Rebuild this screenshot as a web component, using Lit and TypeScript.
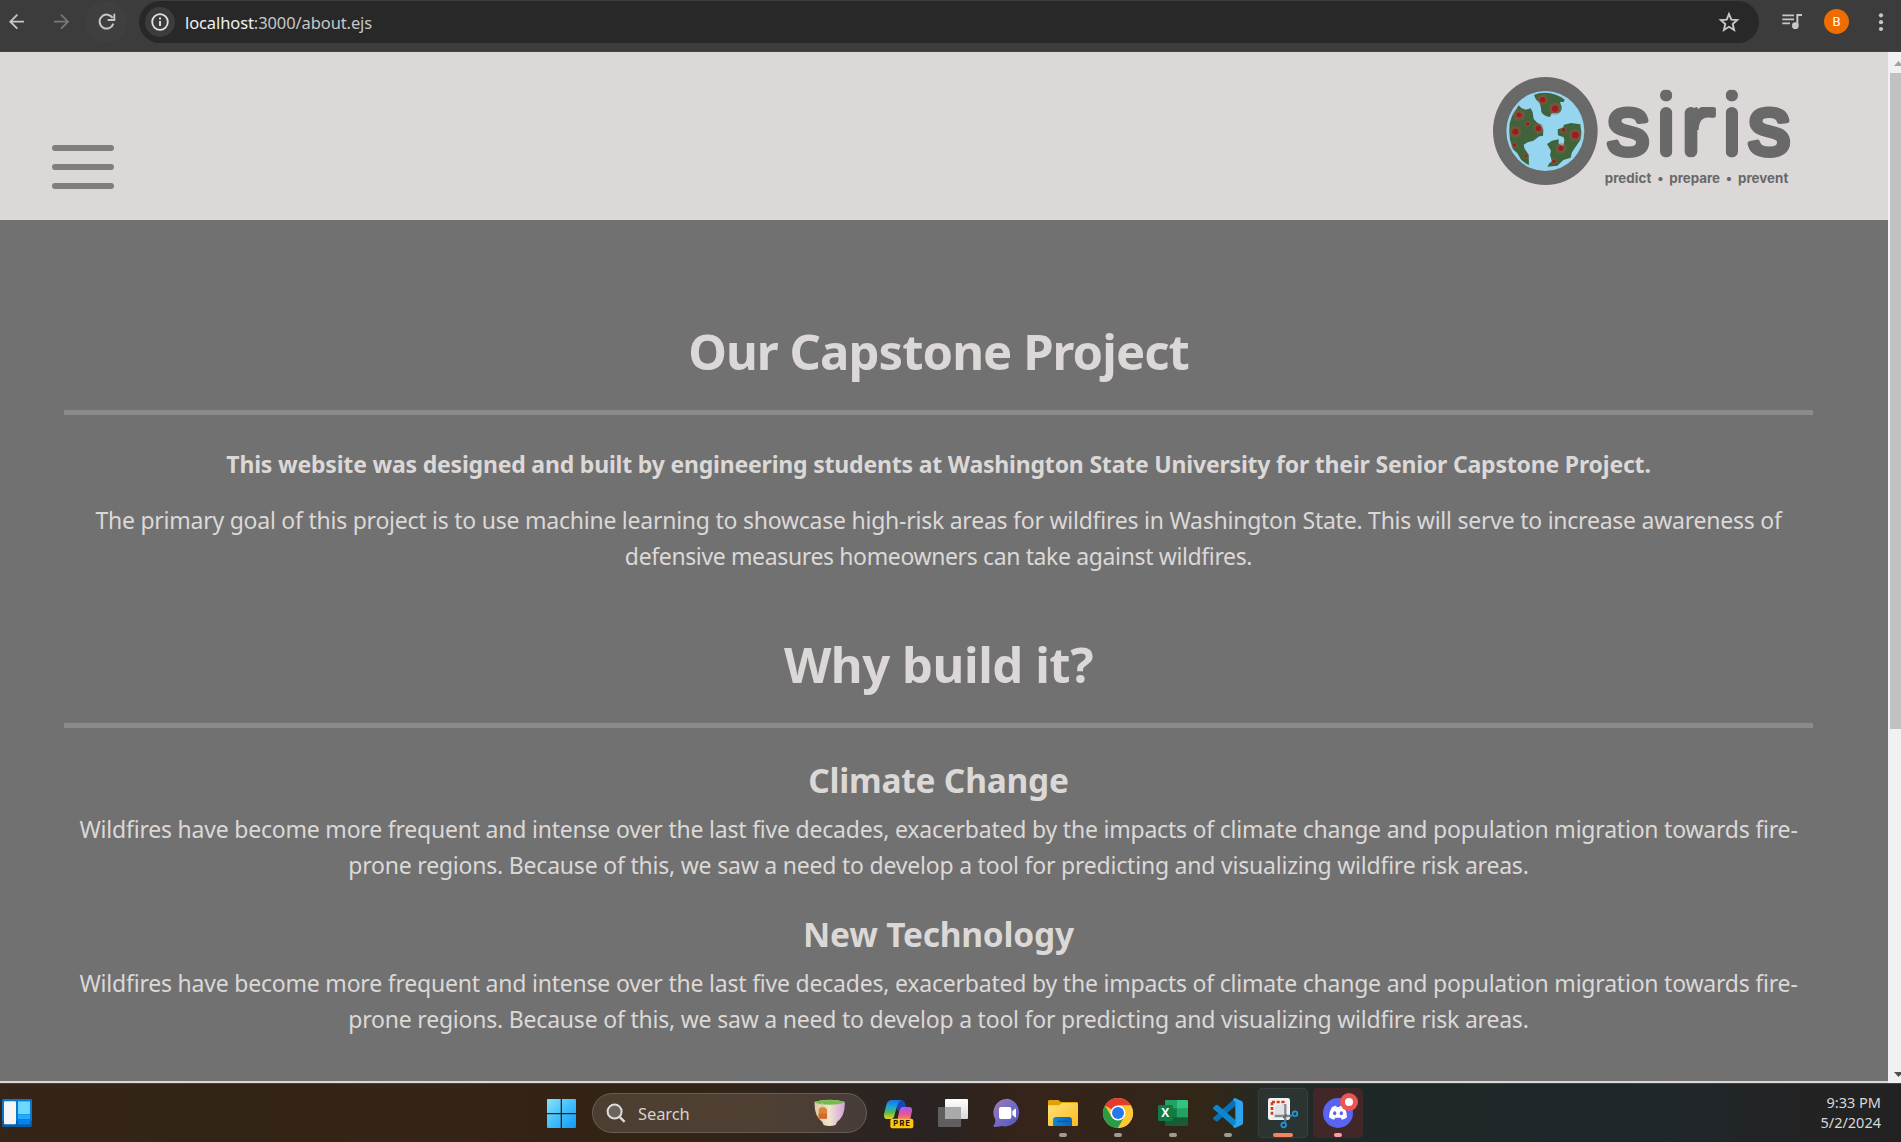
import { LitElement, html, svg, css } from "lit";
import { customElement } from "lit/decorators.js";

@customElement("browser-toolbar")
class BrowserToolbar extends LitElement {
  static styles = css`
    :host { display: flex; height: 52px; background: #3c3c3c; font-family: "Noto Sans", "Open Sans", sans-serif; box-shadow: inset 0 -1px #424242; }
    svg { display: block; flex: none; }
    .pill { display: flex; align-items: center; width: 1620px; height: 42px; margin-top: 1px; border-radius: 21px; background: #282828; box-sizing: border-box; padding: 0 18px 0 6px; }
    .url { flex: 1; margin-left: 10px; font-size: 16.5px; line-height: 42px; letter-spacing: -0.1px; color: #c7c7c7; padding-top: 1px; }
    .host { color: #f1f1f1; }
    .right { display: flex; align-items: center; height: 43px; flex: 1; }
    .music { margin-left: 22px; }
    .avatar { width: 25px; height: 25px; margin-left: 21px; border-radius: 50%; background: #ef6c00; color: #fff; font: 400 13px/25px Roboto, sans-serif; text-align: center; }
    .dots { margin-left: 27px; }
  `;
  render() {
    return html`
      <svg width="43" height="43" viewBox="0 0 129 129" fill="none" stroke="#c7c7c7" stroke-width="5.5"><path d="M72 65H31M52 44L31 65L52 86" /></svg>
      <svg width="42" height="43" viewBox="129 0 126 129" fill="none" stroke="#777" stroke-width="5.5"><path d="M162 65H203M183 44L204 65L183 86" /></svg>
      <svg width="54" height="43" viewBox="255 0 162 129" fill="none"><circle cx="319" cy="65" r="62" fill="#3f3f3f" /><path d="M338 54A21 21 0 1 0 340 71" stroke="#c7c7c7" stroke-width="6" /><path d="M343 41V60H323" stroke="#c7c7c7" stroke-width="5.5" /></svg>
      <div class="pill">
        <svg width="30" height="30" viewBox="0 0 30 30"><circle cx="15" cy="15" r="15" fill="#3c3c3c" /><circle cx="15" cy="15" r="7.8" fill="none" stroke="#e3e3e3" stroke-width="1.8" /><path d="M15 14v5M15 10.4v2" stroke="#e3e3e3" stroke-width="1.9" /></svg>
        <div class="url"><span class="host">localhost</span>:3000/about.ejs</div>
        <svg width="24" height="24" viewBox="0 0 24 24" fill="none" stroke="#c7c7c7" stroke-width="1.9"><path d="M12 4L14.3 9.6L20.2 10L15.7 14L17.1 20L12 16.8L6.9 20L8.3 14L3.8 10L9.7 9.6Z" /></svg>
      </div>
      <div class="right">
        <svg class="music" width="22" height="20" viewBox="303 34 66 60"><path d="M307 44H342M307 56H342M307 68H330" stroke="#c7c7c7" stroke-width="5.5" /><path d="M352 76V43H366" fill="none" stroke="#c7c7c7" stroke-width="6" /><circle cx="346" cy="75" r="10" fill="#c7c7c7" /></svg>
        <div class="avatar">B</div>
        <svg class="dots" width="10" height="24" viewBox="0 0 10 24" fill="#c7c7c7"><circle cx="5" cy="5.3" r="2.1" /><circle cx="5" cy="12.2" r="2.1" /><circle cx="5" cy="19" r="2.1" /></svg>
      </div>`;
  }
}

@customElement("osiris-logo")
class OsirisLogo extends LitElement {
  static styles = css`
    :host { display: block; width: 340px; height: 140px; }
    svg { display: block; }
    .word { font-family: "Liberation Sans", sans-serif; font-size: 262px; fill: #696969; stroke: #696969; stroke-width: 14px; stroke-linejoin: round; }
    .s { font-size: 252px; stroke-width: 18px; }
    .tag { font-family: Inter, sans-serif; font-weight: 700; font-size: 40px; fill: #696969; }
    .dot { text-anchor: middle; }
  `;
  render() {
    const fires = [[218, 119, 8, 16], [255, 146, 9, 19], [147, 165, 7, 19], [173, 192, 5, 9], [205, 205, 8, 16], [136, 215, 9, 18], [133, 255, 5, 10], [168, 288, 4, 8], [281, 210, 5, 10], [316, 225, 10, 19], [273, 265, 7, 17], [252, 304, 5, 9]];
    return html`
      <svg width="340" height="140" viewBox="0 0 1020 420">
        <defs>
          <clipPath id="round">
            <rect x="400" y="130" width="162" height="175" /><rect x="822" y="130" width="170" height="175" />
            <rect x="570" y="141" width="37" height="152" rx="18.5" /><rect x="767" y="141" width="37" height="152" rx="18.5" />
            <circle cx="588.500" cy="106" r="18.500" /><circle cx="785.500" cy="106" r="18.500" />
            <rect x="644" y="141" width="38" height="152" rx="19" /><rect x="664" y="141" width="83" height="40" rx="18" /><rect x="680" y="160" width="30" height="50" />
          </clipPath>
        </defs>
        <ellipse cx="226" cy="213" rx="157" ry="162" fill="#696969" />
        <ellipse cx="226" cy="213" rx="117" ry="120" fill="#95d5f0" />
        <g fill="#40633b">
          <path d="M192 105Q205 98 225 98Q260 99 284 119L281 126L270 126L275 141Q276 157 262 160L245 160L240 171Q222 170 214 156Q213 136 207 126Q197 121 192 105Z" />
          <path d="M146 136L154 144L167 149L182 145L188 157L191 177L202 188L212 194L220 211L219 228L208 229L190 242L173 247L161 254L164 266L176 284L177 315Q160 308 152 297L142 280L129 268L120 240L118 215L119 190L126 168Z" />
          <path d="M282 194L303 189L331 193L334 218L331 240L317 260L306 277L302 293L280 300L262 317L232 320L238 310L246 304L240 285L243 272L231 252L246 242L266 238L266 252L280 258L283 240L281 232L264 226L263 208L279 203Z" />
        </g>
        ${fires.map(([x, y, r, g]) => svg`<circle cx=${x} cy=${y} r=${g} fill="#b05545" opacity=".3"/><circle cx=${x} cy=${y} r=${g * 0.7} fill="#a83c30" opacity=".3"/><circle cx=${x} cy=${y} r=${r} fill="#a5161e"/>`)}
        <g clip-path="url(#round)" class="word">
          <text><tspan class="s" x="412" y="282">s</tspan><tspan x="559.500" y="286">i</tspan></text>
          <text transform="translate(626 286) scale(1.24 1)">r</text>
          <text><tspan x="756.500" y="286">i</tspan><tspan class="s" x="835" y="282">s</tspan></text>
        </g>
        <g class="tag">
          <text x="404" y="368" textLength="140">predict</text><text class="dot" x="571" y="368">•</text>
          <text x="598" y="368" textLength="152">prepare</text><text class="dot" x="777" y="368">•</text>
          <text x="804" y="368" textLength="151">prevent</text>
        </g>
      </svg>`;
  }
}

@customElement("about-page")
class AboutPage extends LitElement {
  static styles = css`
    :host { display: flex; height: 1031px; font-family: "Noto Sans", "Open Sans", sans-serif; color: #dcd8d7; }
    .view { display: flex; flex-direction: column; width: 1888px; }
    header { display: flex; justify-content: space-between; height: 168px; background: #dcd8d7; }
    .menu { display: flex; flex-direction: column; gap: 13px; margin: 93px 0 0 52px; }
    .bar { width: 62px; height: 6px; border-radius: 3px; background: #7f7f7e; }
    osiris-logo { margin: 8px 78px 0 0; }
    main { flex: 1; box-sizing: border-box; padding: 100px 75px 0 64px; background: #717171; text-align: center; white-space: nowrap; border-bottom: 2px solid #dcd8d7; }
    h1, h2, p { margin: 0; }
    h1 { font-size: 49px; line-height: 62px; letter-spacing: -0.95px; font-weight: 700; }
    .rule { height: 5px; background: #8b8b8b; margin-top: 28px; }
    .lead { margin-top: 31px; font-size: 23px; line-height: 36px; font-weight: 700; letter-spacing: -0.195px; }
    .body { font-size: 23px; line-height: 36px; letter-spacing: -0.21px; }
    .goal { margin-top: 20px; letter-spacing: -0.24px; }
    .tight { letter-spacing: -0.37px; }
    .why { margin-top: 59px; letter-spacing: -0.45px; }
    h2 { margin-top: 29px; font-size: 33.5px; line-height: 44px; font-weight: 700; letter-spacing: -0.22px; }
    .rule + h2 { margin-top: 30px; }
    h2 + .body { margin-top: 9px; }
    .scroll { width: 13px; background: #f1f1f1; overflow: hidden; display: flex; flex-direction: column; justify-content: space-between; }
    .thumb { width: 11px; height: 656px; margin: 0 0 auto 2px; background: #c1c1c1; }
    .scroll svg { display: block; }
  `;
  render() {
    const reason = (title: string) => html`
      <h2>${title}</h2>
      <p class="body">Wildfires have become more frequent and intense over the last five decades, exacerbated by the impacts of climate change and population migration towards fire-<br />prone regions. Because of this, we saw a need to develop a tool for predicting and visualizing wildfire risk areas.</p>`;
    return html`
      <div class="view">
        <header>
          <div class="menu"><div class="bar"></div><div class="bar"></div><div class="bar"></div></div>
          <osiris-logo></osiris-logo>
        </header>
        <main>
          <h1>Our Capstone Project</h1>
          <div class="rule"></div>
          <p class="lead">This website was designed and built by engineering students at Washington State University for their Senior Capstone Project.</p>
          <p class="body goal">The primary goal of this project is to use machine learning to showcase high-risk areas for wildfires in Washington State. This will serve to increase awareness of<br /><span class="tight">defensive measures homeowners can take against wildfires.</span></p>
          <h1 class="why">Why build it?</h1>
          <div class="rule"></div>
          ${reason("Climate Change")} ${reason("New Technology")}
        </main>
      </div>
      <div class="scroll">
        <svg width="13" height="21" viewBox="0 0 13 21"><path d="M6 14L10.5 9L15 14Z" fill="#a3a3a3" /></svg>
        <div class="thumb"></div>
        <svg width="13" height="20" viewBox="0 0 13 20"><path d="M6 9L10.5 14L15 9Z" fill="#505050" /></svg>
      </div>`;
  }
}

@customElement("task-bar")
class TaskBar extends LitElement {
  static styles = css`
    :host { display: flex; height: 59px; box-sizing: border-box; font-family: "Noto Sans", "Open Sans", sans-serif; border-top: 1px solid #4a4038;
      background: linear-gradient(90deg, #352518 0, #322416 200px, #352417 400px, #322315 700px, #2c2522 850px, #2a2321 940px, #352419 1020px, #33251a 1140px, #312718 1210px, #232a27 1280px, #1e2728 1370px, #20262a 1700px, #232324 1800px, #232222 1901px); }
    svg { display: block; flex: none; margin-top: -1px; }
    .widgets { margin-right: 501px; }
    .search { display: flex; align-items: center; box-sizing: border-box; width: 275px; height: 40px; margin: 9px 3px 0 0; border: 1px solid #6a5e54; border-radius: 20px; background: linear-gradient(90deg, #4c3e31, #4f4033 60%, #463c38); padding: 0 20px 0 13px; }
    .search svg { margin: 0; }
    .label { flex: 1; margin-left: 12px; font-size: 16.5px; letter-spacing: -0.1px; color: #d8d2cd; }
    .pre { font: 800 22px Inter, sans-serif; fill: #1c1a12; letter-spacing: 1px; }
    .x { font: 700 36px "Open Sans", sans-serif; fill: #fff; }
    .clock { margin: 8px 20px 0 auto; font-size: 14.5px; line-height: 20px; letter-spacing: 0; text-align: right; color: #d8d8d8; }
  `;
  cell(x: number, body: unknown) {
    return html`<svg width="55" height="59" viewBox="${x} 24 165 177">${body}</svg>`;
  }
  render() {
    return html`
      <svg class="widgets" width="34" height="59" viewBox="0 69 102 177">
        <rect x="6" y="117" width="90" height="84" rx="5" fill="#0b5cab" /><path d="M6 122q0-5 5-5h80q5 0 5 5v60H6z" fill="#0877cf" />
        <rect x="12" y="124" width="36" height="69" rx="3" fill="#f5f5f5" /><rect x="54" y="124" width="36" height="38" fill="#6bd9ff" /><rect x="54" y="163" width="36" height="14" fill="#20abff" /><rect x="54" y="178" width="36" height="15" fill="#0583ee" />
      </svg>
      <svg width="57" height="59" viewBox="15 24 171 177">
        <defs><linearGradient id="w" x1="51" y1="72" x2="138" y2="159" gradientUnits="userSpaceOnUse"><stop stop-color="#8be0fb" /><stop offset=".5" stop-color="#41c0fb" /><stop offset="1" stop-color="#1298fa" /></linearGradient></defs>
        <path fill="url(#w)" d="M51 75q0-3 3-3h38v42H51zM96 72h39q3 0 3 3v39H96zM51 118h41v41H54q-3 0-3-3zM96 118h42v38q0 3-3 3H96z" />
      </svg>
      <div class="search">
        <svg width="20" height="20" viewBox="0 0 20 20" fill="none" stroke="#dcdcdc" stroke-width="2"><circle cx="8.6" cy="8.6" r="7" fill="#6b625b" /><path d="M13.6 13.8L18.6 18.8" stroke-width="2.4" /></svg>
        <span class="label">Search</span>
        <svg width="32" height="30" viewBox="853 73 96 90">
          <defs><linearGradient id="c"><stop stop-color="#dfc9a0" /><stop offset=".5" stop-color="#efe5cb" /><stop offset="1" stop-color="#d1a0e0" /></linearGradient></defs>
          <path fill="url(#c)" d="M855 84Q900 72 945 84Q948 125 922 145L918 154Q900 160 882 154L878 145Q852 125 855 84Z" /><ellipse cx="900" cy="86" rx="42" ry="7" fill="#72bd4c" />
          <path d="M878 88V103" stroke="#cfc7b6" stroke-width="4" /><path d="M867 107L873 101H885L892 107V135H867Z" fill="#d98432" /><path d="M867 120H892V135H867Z" fill="#cf6a35" />
        </svg>
      </div>
      ${this.cell(1020, svg`
        <defs><linearGradient id="a" x2="0" y2="1"><stop stop-color="#1d6fe0"/><stop offset=".35" stop-color="#18a6dd"/><stop offset=".65" stop-color="#56b850"/><stop offset="1" stop-color="#ead21c"/></linearGradient><linearGradient id="b" x2="0" y2="1"><stop stop-color="#a45cf5"/><stop offset=".5" stop-color="#e2549f"/><stop offset="1" stop-color="#f58a4e"/></linearGradient></defs>
        <path fill="#1747b8" d="M1096 75H1112Q1121 75 1125 84L1129 96H1112L1104 110Z"/>
        <path fill="url(#a)" d="M1085 75H1114Q1106 78 1102 90L1093 122Q1090 132 1080 132H1071Q1060 132 1062 118L1069 89Q1073 75 1085 75Z"/>
        <path fill="url(#b)" d="M1116 96H1137Q1148 96 1146 108L1140 136H1102L1107 112Q1109 98 1116 96Z"/>
        <rect x="1081" y="131" width="69" height="29" rx="6" fill="#ffc708"/><text class="pre" x="1090" y="154" textLength="51">PRE</text>`)}
      ${this.cell(1185, svg`
        <defs><linearGradient id="t" x2="0" y2="1"><stop stop-color="#fff"/><stop offset="1" stop-color="#d9d9d9"/></linearGradient></defs>
        <rect x="1245" y="72" width="69" height="60" rx="3" fill="url(#t)"/><rect x="1224" y="96" width="69" height="60" rx="3" fill="#666" opacity=".9"/><path fill="#aaa" d="M1245 96h48v36h-48z"/>`)}
      ${this.cell(90, svg`
        <defs><linearGradient id="m" x2="1" y2="1"><stop stop-color="#a777a8"/><stop offset=".4" stop-color="#7b6fc4"/><stop offset="1" stop-color="#5056bd"/></linearGradient></defs>
        <path fill="url(#m)" d="M173 71A42 42 0 1 1 155 153Q145 156 133 156Q128 155 132 149Q137 144 136 134A42 42 0 0 1 173 71Z"/><rect x="147" y="96" width="37" height="36" rx="6" fill="#fff"/><path fill="#fff" d="M187 109L195 101Q198 99 198 104V124Q198 129 195 127L187 119Z"/>`)}
      ${this.cell(255, svg`
        <defs><linearGradient id="f" x2="1" y2="1"><stop stop-color="#ffe17a"/><stop offset="1" stop-color="#fbba1d"/></linearGradient><linearGradient id="g" x2="1"><stop stop-color="#0f86d8"/><stop offset="1" stop-color="#0b62b8"/></linearGradient></defs>
        <path fill="#e0a008" d="M294 79q0-4 4-4h25q3 0 6 3l4 3h47q4 0 4 4v20h-90z"/><path fill="url(#f)" d="M294 91h30q4 0 7-3l5-4h44q4 0 4 4v61q0 4-4 4h-82q-4 0-4-4z"/><path fill="url(#g)" d="M309 153v-17q0-10 10-10h37q10 0 10 10v17z"/><path d="M322 139h32" stroke="#084f96" stroke-width="3"/><rect x="327" y="174" width="24" height="12" rx="6" fill="#a09a92"/>`)}
      ${this.cell(420, svg`
        <circle cx="504" cy="114" r="45" fill="#fcc934"/>
        <path fill="#e33b2e" d="M504 114L465 91.500A45 45 0 0 1 543 91.500H504Z"/><path fill="#2b9b47" d="M504 114L484.500 125.300L465 91.500A45 45 0 0 0 504 159L523.500 125.300Z"/><path fill="#fcc934" d="M504 159A45 45 0 0 0 543 91.500H504L523.500 125.300Z"/>
        <circle cx="504" cy="114" r="22.500" fill="#fff"/><circle cx="504" cy="114" r="18" fill="#2478eb"/><rect x="492" y="174" width="24" height="12" rx="6" fill="#a09a92"/>`)}
      ${this.cell(585, svg`
        <rect x="645" y="75" width="69" height="78" rx="4" fill="#185c37"/><path fill="#21a366" d="M649 75h31v26h-35v-22q0-4 4-4z"/><path fill="#33c481" d="M680 75h30q4 0 4 4v22h-34z"/><path fill="#107c41" d="M645 101h35v26h-35z"/><path fill="#21a366" d="M680 101h34v26h-34z"/>
        <rect x="624" y="90" width="45" height="48" rx="4" fill="#107c41"/><text class="x" x="634" y="127">X</text><rect x="657" y="174" width="24" height="12" rx="6" fill="#a09a92"/>`)}
      ${this.cell(750, svg`
        <path fill="#0a70b8" d="M789 132Q788 129 791 127L855 70L857 92L804 138Q801 141 798 139Z"/><path fill="#0b87cf" d="M789 98Q788 101 791 103L855 158L857 136L804 91Q801 88 798 90Z"/><path fill="#2aa5ee" d="M855 69L875 78Q879 80 879 85V144Q879 148 875 150L855 159Q850 158 849 154L856 146V82L849 74Q850 70 855 69Z"/><rect x="822" y="174" width="24" height="12" rx="6" fill="#a09a92"/>`)}
      ${this.cell(915, svg`
        <rect x="925" y="40" width="148" height="148" rx="13" fill="#2c3432" stroke="#3d4543" stroke-width="2.500"/><rect x="954" y="69" width="66" height="66" rx="7" fill="#f0f2f4"/>
        <rect x="966" y="81" width="34" height="34" fill="none" stroke="#d43d10" stroke-width="8" stroke-dasharray="9 5"/><rect x="974" y="89" width="32" height="32" rx="3" fill="#dfe3e8"/>
        <path d="M1006 87V137M974 123H1024" stroke="#858b91" stroke-width="7"/><path d="M1000 129L1010 119" stroke="#555b60" stroke-width="5"/><g fill="none" stroke="#1e9be0" stroke-width="5"><circle cx="1035" cy="116" r="7"/><circle cx="1001" cy="150" r="7"/></g><path d="M1018 123L1029 120M1006 133L1004 143" stroke="#1e7fc0" stroke-width="6"/>
        <rect x="969" y="174" width="60" height="12" rx="6" fill="#f5835f"/>`)}
      ${this.cell(1080, svg`
        <rect x="1089" y="39" width="150" height="150" rx="13" fill="#412728"/><circle cx="1164" cy="114" r="45" fill="#5865f2"/>
        <path fill="#fff" d="M1146 96Q1152 93 1158 92L1160 96H1168L1170 92Q1177 93 1182 96Q1191 110 1191 127Q1185 132 1176 134L1172 128H1156L1152 134Q1143 132 1137 127Q1137 110 1146 96Z"/><ellipse cx="1154" cy="115" rx="5" ry="6" fill="#5865f2"/><ellipse cx="1174" cy="115" rx="5" ry="6" fill="#5865f2"/>
        <circle cx="1197" cy="81" r="27" fill="#ec5555"/><circle cx="1197" cy="81" r="12" fill="#fff"/><rect x="1152" y="174" width="24" height="12" rx="6" fill="#ff9aa2"/>`)}
      <div class="clock">9:33 PM<br />5/2/2024</div>`;
  }
}

@customElement("app-root")
class AppRoot extends LitElement {
  static styles = css`
    :host { display: flex; flex-direction: column; width: 1901px; height: 1142px; overflow: hidden; background: #717171; }
  `;
  render() {
    return html`<browser-toolbar></browser-toolbar><about-page></about-page><task-bar></task-bar>`;
  }
}
